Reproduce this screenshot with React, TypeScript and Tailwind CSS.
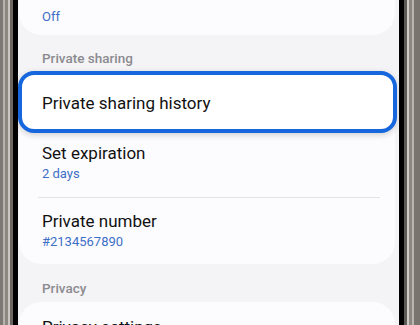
import React from "react";

function Bezel({ side }: { side: "left" | "right" }) {
  if (side === "left") {
    return (
      <div className="flex shrink-0">
        <div className="w-[3px] bg-[#7d7873]" />
        <div className="w-[2px] bg-[#b8b2ac]" />
        <div className="w-[3px] bg-[#8d8782]" />
        <div className="w-[2px] bg-[#cbc6c1]" />
        <div className="w-[3px] bg-[#6b6662]" />
        <div className="w-[5px] bg-black" />
      </div>
    );
  }
  return (
    <div className="flex shrink-0">
      <div className="w-[5px] bg-black" />
      <div className="w-[3px] bg-[#5d5955]" />
      <div className="w-[2px] bg-[#d0ccc8]" />
      <div className="w-[3px] bg-[#8e8883]" />
      <div className="w-[2px] bg-[#bbb5b0]" />
      <div className="w-[6px] bg-[#7a746f]" />
    </div>
  );
}

function Row({ title, value, className }: { title: string; value: string; className: string }) {
  return (
    <div className={`flex flex-col pl-[23px] shrink-0 ${className}`}>
      <span className="text-[17px] leading-[22px] text-[#111]">{title}</span>
      <span className="text-[13px] leading-[18px] text-[#3d6fc6] mt-[1px]">{value}</span>
    </div>
  );
}

export default function App() {
  return (
    <div
      className="w-[420px] h-[325px] overflow-hidden flex"
      style={{ fontFamily: "Roboto, 'Noto Sans', sans-serif" }}
    >
      <Bezel side="left" />
      <div className="flex-1 bg-[#f4f4f6] flex flex-col pl-[1px] pr-[4px] overflow-hidden">
        {/* top card tail */}
        <div className="h-[35px] shrink-0 bg-[#fcfcfe] rounded-b-[22px] pl-[23px] pt-[4px]">
          <span className="text-[13px] leading-[18px] text-[#3d6fc6]">Off</span>
        </div>

        <div className="shrink-0 pl-[23px] pt-[14px] pb-[4px] text-[13.5px] leading-[18px] font-medium text-[#8b8b8f]">
          Private sharing
        </div>

        <div className="shrink-0 bg-[#fcfcfe] rounded-[22px] flex flex-col">
          <div className="shrink-0 -ml-[1px] -mr-[2px] h-[62px] bg-white border-[4px] border-[#1667de] rounded-[16px] shadow-[0_2px_6px_rgba(0,0,0,0.18)] flex items-center pl-[20px]">
            <span className="text-[17px] leading-[22px] text-[#111] pt-[1px]">Private sharing history</span>
          </div>
          <Row title="Set expiration" value="2 days" className="pt-[9px] pb-[14px]" />
          <div className="shrink-0 ml-[19px] mr-[15px] h-px bg-[#e4e4e6]" />
          <Row title="Private number" value="#2134567890" className="pt-[12px] pb-[13px]" />
        </div>

        <div className="shrink-0 pl-[23px] pt-[15px] pb-[5px] text-[13.5px] leading-[18px] font-medium text-[#8b8b8f]">
          Privacy
        </div>

        <div className="shrink-0 h-[60px] bg-[#fcfcfe] rounded-t-[22px] pl-[23px] pt-[14px]">
          <span className="text-[17px] leading-[22px] text-[#111]">Privacy settings</span>
        </div>
      </div>
      <Bezel side="right" />
    </div>
  );
}
